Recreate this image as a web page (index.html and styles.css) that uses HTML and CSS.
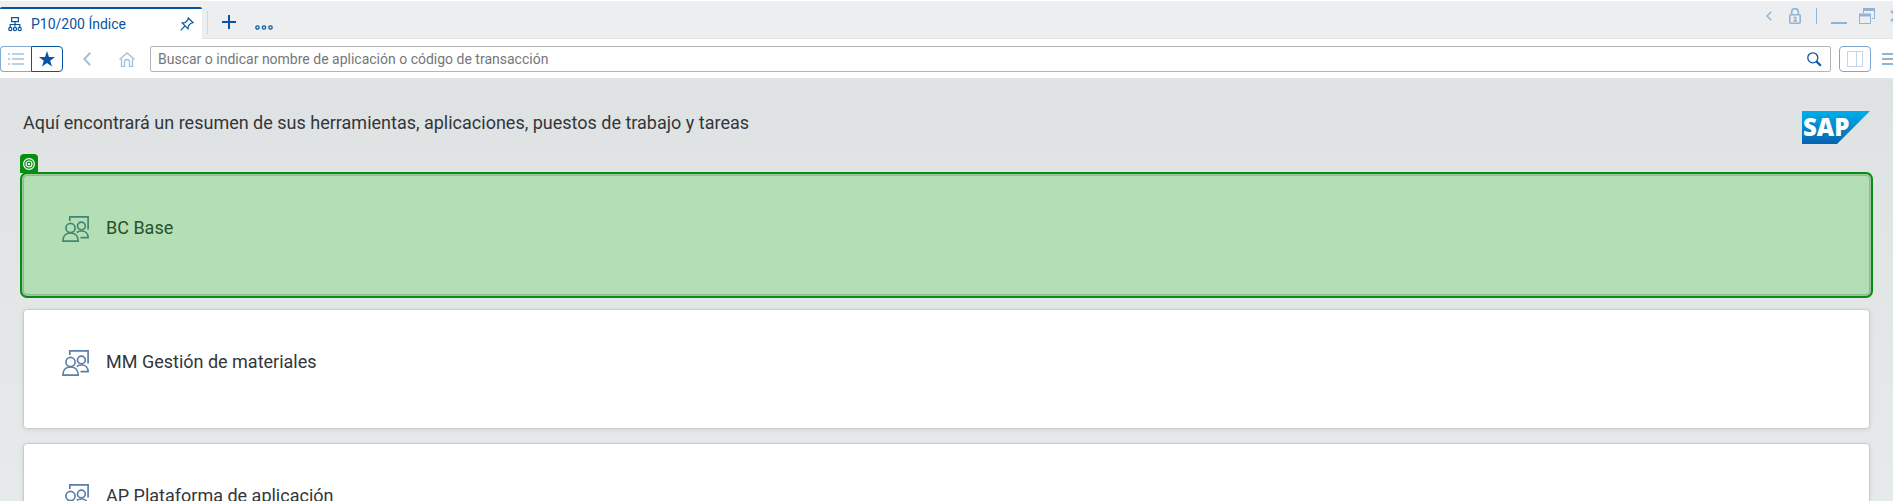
FILE: index.html
```html
<!DOCTYPE html>
<html lang="es">
<head>
<meta charset="utf-8">
<title>P10/200 Índice</title>
<link rel="stylesheet" href="styles.css">
</head>
<body>
<svg class="defs" aria-hidden="true">
  <symbol id="people" viewBox="0 0 27 26">
    <g fill="none" stroke="currentColor" stroke-width="1.7">
      <path d="M7.800 5V.9h18.300v12.600M18.500 21.600h7.600c0-4-2.600-6.600-6.600-6.600-2 0-3.500.4-4.700 1.500"/>
      <circle cx="8.500" cy="12" r="4.600"/>
      <circle cx="19.400" cy="10" r="3.900"/>
      <path d="M.9 25.100c0-5 3-8.100 7.600-8.100s7.700 3.100 7.700 8.100z"/>
    </g>
  </symbol>
</svg>
<header class="tabbar">
  <button class="tab">
    <svg class="tab-icon" width="14" height="15" viewBox="0 0 14 15" fill="none" stroke="currentColor" stroke-width="1.2"><path d="M3.600.6h6.800v4H3.600zM7 4.600v5M2.200 10V7.500h9.600V10"/><circle cx="2.300" cy="12" r="1.600"/><circle cx="7" cy="12" r="1.600"/><circle cx="11.700" cy="12" r="1.600"/></svg>
    <span class="tab-title">P10/200 Índice</span>
    <svg width="14" height="14" viewBox="0 0 14 14" fill="none" stroke="currentColor" stroke-width="1.200"><path d="M8.300 1l4.700 4.700-2 .5-2.600 2.600-.4 3L2.200 6l3-.4L7.800 3zM5 8.900L.7 13.300"/></svg>
  </button>
  <span class="tab-divider"></span>
  <button class="plain add" aria-label="Nueva pestaña"><svg width="14" height="14" viewBox="0 0 14 14" stroke="currentColor" stroke-width="2"><path d="M0 7h14M7 0v14"/></svg></button>
  <button class="plain more" aria-label="Más"><svg width="18" height="5" viewBox="0 0 18 5" fill="none" stroke="currentColor" stroke-width="1.200"><circle cx="2.500" cy="2.500" r="1.700"/><circle cx="9" cy="2.500" r="1.700"/><circle cx="15.500" cy="2.500" r="1.700"/></svg></button>
  <div class="window-controls">
    <button class="plain" aria-label="Anterior"><svg width="6" height="10" viewBox="0 0 6 10" fill="none" stroke="currentColor" stroke-width="1.400"><path d="M5.200.8L1 5l4.200 4.200"/></svg></button>
    <button class="plain lock" aria-label="Bloqueo"><svg width="12" height="16" viewBox="0 0 12 16" fill="none" stroke="currentColor" stroke-width="1.600"><rect x=".8" y="6.800" width="10.400" height="8.400" rx="1"/><path d="M2.700 6.500V4a3.300 3.300 0 0 1 6.600 0v2.500M4.500 9.500h2v3.200M4.200 13h3.800"/></svg></button>
    <span class="control-divider"></span>
    <button class="plain minimize" aria-label="Minimizar"><svg width="16" height="16" viewBox="0 0 16 16" fill="currentColor"><path d="M0 14h16v2H0z"/></svg></button>
    <button class="plain restore" aria-label="Restaurar"><svg width="16" height="16" viewBox="0 0 16 16" fill="none" stroke="currentColor"><path d="M.5 6.500h11v9H.5zM4.500 5V1.500h11v9H13"/><path stroke-width="3" d="M0 7h12M4 1.500h12"/></svg></button>
    <button class="plain close" aria-label="Cerrar"><svg width="12" height="12" viewBox="0 0 12 12" stroke="currentColor" stroke-width="2"><path d="M1 1l10 10M11 1L1 11"/></svg></button>
  </div>
</header>
<div class="toolbar">
  <div class="switch">
    <button class="switch-item list" aria-label="Lista"><svg width="16" height="12" viewBox="0 0 16 12" fill="currentColor"><path d="M0 0h2v2H0zM4 0h12v2H4zM0 5h2v2H0zM4 5h12v2H4zM0 10h2v2H0zM4 10h12v2H4z"/></svg></button>
    <button class="switch-item favorites" aria-label="Favoritos"><svg width="16" height="16" viewBox="0 0 16 16" fill="currentColor"><path d="M8 0l2 5.900 6 .1-4.800 3.700L13 15.600 8 12.100l-5 3.500 1.800-5.900L0 6l6-.1z"/></svg></button>
  </div>
  <button class="plain back" aria-label="Atrás"><svg width="8" height="14" viewBox="0 0 8 14" fill="none" stroke="currentColor" stroke-width="2"><path d="M7.200.8L1.400 7l5.800 6.200"/></svg></button>
  <button class="plain home" aria-label="Inicio"><svg width="16" height="15" viewBox="0 0 16 15" fill="none" stroke="currentColor" stroke-width="1.300"><path d="M.5 7.500L8 .9l7.500 6.600M2.500 7v7.300h3V10a2.500 2.500 0 0 1 5 0v4.300h3V7"/></svg></button>
  <div class="search">
    <input class="search-input" type="text" aria-label="Buscar" placeholder="Buscar o indicar nombre de aplicación o código de transacción">
    <button class="plain find" aria-label="Iniciar búsqueda"><svg width="15" height="15" viewBox="0 0 15 15" fill="none" stroke="currentColor"><circle cx="5.800" cy="5.800" r="5" stroke-width="1.300"/><path d="M9.500 9.500l4.300 4.300" stroke-width="2.200"/></svg></button>
  </div>
  <button class="split" aria-label="Dividir vista"><svg width="16" height="16" viewBox="0 0 16 16" fill="none" stroke="currentColor"><path d="M.5.5h15v15H.5zM9.500.5v15"/></svg></button>
  <button class="plain menu" aria-label="Menú"><svg width="16" height="12" viewBox="0 0 16 12" fill="currentColor"><path d="M0 0h16v2H0zM0 5h16v2H0zM0 10h16v2H0z"/></svg></button>
</div>
<main class="page">
  <div class="intro">
    <h1 class="intro-text">Aquí encontrará un resumen de sus herramientas, aplicaciones, puestos de trabajo y tareas</h1>
    <svg class="logo" width="68" height="33" viewBox="0 0 68 33" role="img" aria-label="SAP">
      <defs><linearGradient id="blue" x1="0" y1="0" x2="0" y2="1"><stop offset="0" stop-color="#00aeea"/><stop offset="1" stop-color="#0763b0"/></linearGradient></defs>
      <path fill="url(#blue)" d="M0 0h68L35 33H0z"/>
      <text class="logo-text" x="1" y="25">SAP</text>
    </svg>
  </div>
  <div class="cards">
    <section class="card selected"><span class="marker"><svg width="12" height="12" viewBox="0 0 12 12" fill="none" stroke="currentColor" stroke-width="1.200"><circle cx="6" cy="6" r="5.400"/><circle cx="6" cy="6" r="3"/><circle cx="6" cy="6" r=".6"/></svg></span><svg class="card-icon"><use href="#people"/></svg><h2 class="card-title">BC Base</h2></section>
    <section class="card"><svg class="card-icon"><use href="#people"/></svg><h2 class="card-title">MM Gestión de materiales</h2></section>
    <section class="card"><svg class="card-icon"><use href="#people"/></svg><h2 class="card-title">AP Plataforma de aplicación</h2></section>
  </div>
</main>
</body>
</html>
```
FILE: styles.css
```css
* { box-sizing: border-box; }
body {
  margin: 0;
  height: 100vh;
  overflow: hidden;
  display: flex;
  flex-direction: column;
  background: #fff;
  color: #32363a;
  font-family: Roboto, "Liberation Sans", sans-serif;
}
svg { display: block; flex: none; }
button { font: inherit; cursor: pointer; }
.defs { position: absolute; width: 0; height: 0; }
.plain { border: 0; padding: 0; background: none; color: inherit; flex: none; }
.tabbar {
  flex: none;
  display: flex;
  align-items: flex-end;
  height: 39px;
  border-top: 1px solid #fff;
  background: #edeef0;
  box-shadow: inset 0 -1px #e2e3e4;
  color: #0854a0;
}
.tab {
  display: flex;
  align-items: center;
  width: 202px;
  height: 32px;
  padding: 0 8px;
  border: 0;
  border-top: 2px solid #0854a0;
  border-radius: 2px 2px 0 0;
  background: #fff;
  color: #0854a0;
  font-size: 14px;
  text-align: left;
}
.tab-title { flex: 1; padding-left: 9px; }
.tab-divider { width: 1px; height: 23px; margin: 0 14px 5px 5px; background: #d5d7d9; }
.add { margin-bottom: 10px; }
.more { margin: 0 0 9px 19px; }
.window-controls {
  display: flex;
  align-items: center;
  align-self: flex-start;
  margin: 7px -9px 0 auto;
  color: #91b3d6;
}
.lock { margin-left: 17px; }
.control-divider { width: 1px; height: 16px; margin: 0 14px 0 15px; background: #91b3d6; }
.restore { margin-left: 12px; }
.close { margin-left: 15px; }
.toolbar {
  flex: none;
  display: flex;
  align-items: center;
  height: 41px;
  padding-top: 1px;
  border-bottom: 2px solid #e3e4e5;
  color: #a3bfdc;
}
.switch { display: flex; height: 26px; flex: none; }
.switch-item {
  display: flex;
  align-items: center;
  justify-content: center;
  width: 32px;
  padding: 0;
  border: 1px solid #84aad0;
  background: #fff;
}
.list { border-right: 0; border-radius: 4px 0 0 4px; color: #bdd1e6; width: 31px; }
.favorites { border-color: #0854a0; border-radius: 0 4px 4px 0; color: #0854a0; }
.back { margin-left: 20px; }
.home { margin: 0 15px 0 28px; }
.search {
  flex: 1;
  display: flex;
  align-items: center;
  height: 26px;
  padding-right: 8px;
  border: 1px solid #b4b5b6;
  border-radius: 2px;
  color: #0854a0;
}
.search-input {
  flex: 1;
  height: 24px;
  padding: 0 7px;
  border: 0;
  outline: 0;
  background: none;
  font: 14px/20px Roboto, "Liberation Sans", sans-serif;
}
.search-input::placeholder { color: #74777a; opacity: 1; }
.split {
  display: flex;
  align-items: center;
  justify-content: center;
  width: 32px;
  height: 26px;
  margin: 0 11px 0 8px;
  padding: 0;
  border: 1px solid #7fa6d0;
  border-radius: 4px;
  background: #fff;
  color: #c5d5e8;
  flex: none;
}
.menu { margin-right: -5px; color: #91b3d6; }
.page {
  flex: 1;
  min-height: 0;
  overflow: hidden;
  padding: 31px 23px 0;
  background: linear-gradient(#dee2e3, #e7eaeb);
}
.intro { display: flex; justify-content: space-between; align-items: flex-start; }
.intro-text { margin: 0; font-size: 18px; line-height: 24px; font-weight: 400; }
.cards { display: flex; flex-direction: column; gap: 14px; margin-top: 31px; }
.card {
  position: relative;
  display: flex;
  gap: 17px;
  height: 120px;
  padding: 40px 38px;
  border: 1px solid #c8cccd;
  border-radius: 4px;
  background: #fff;
  box-shadow: 0 1px 5px #00000018;
}
.card-icon { width: 27px; height: 26px; color: #5b80a8; }
.card-title { margin: 0; font-size: 18px; line-height: 24px; font-weight: 400; }
.selected { background: #b4deb4; border-color: #8fb795; color: #26522e; box-shadow: 0 0 0 1px #9dc8a1, 0 0 0 3px #078d10; }
.selected .card-icon { color: #438677; }
.marker {
  position: absolute;
  left: -4px;
  top: -22px;
  display: flex;
  align-items: center;
  justify-content: center;
  width: 18px;
  height: 19px;
  border-radius: 4px 4px 0 0;
  background: #078d10;
  color: #fff;
}
.logo { overflow: visible; }
.logo-text { fill: #fff; font: 800 24px "Open Sans", sans-serif; }
```
